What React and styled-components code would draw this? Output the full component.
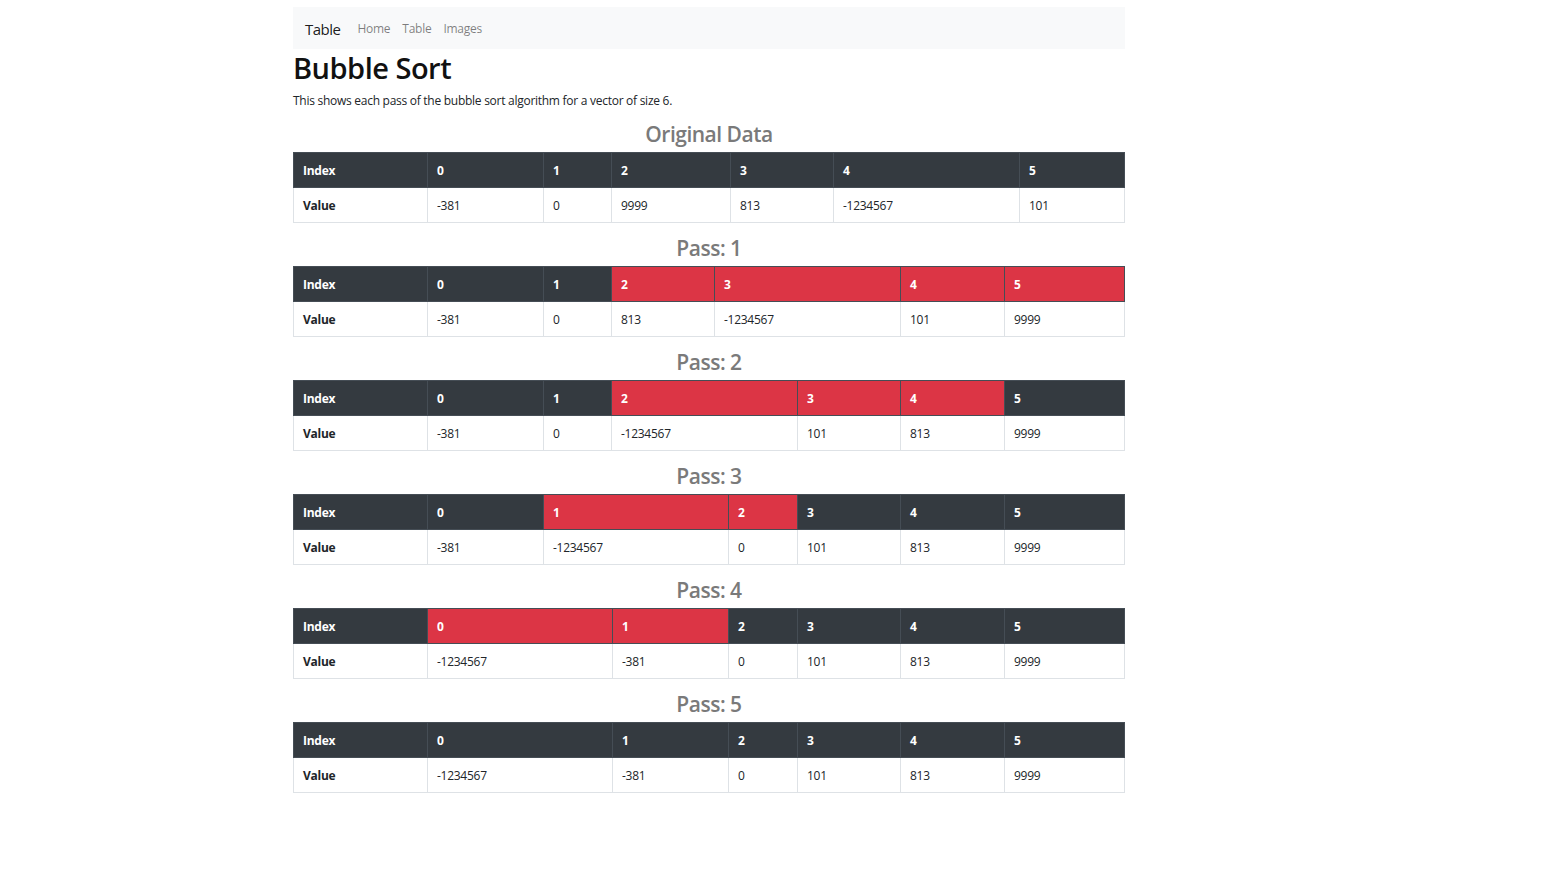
import React from "react";
import styled, { createGlobalStyle } from "styled-components";

const Global = createGlobalStyle`
  html, body { margin: 0; padding: 0; background: #fff; }
  body {
    font-family: "Open Sans", "Noto Sans", "Liberation Sans", sans-serif;
    font-size: 12px;
    line-height: 1.5;
    letter-spacing: -0.27px;
    color: #212529;
  }
`;

const Page = styled.div`
  width: 832px;
  margin: 7px 0 0 293px;
`;

const Navbar = styled.nav`
  display: flex;
  align-items: center;
  height: 40px;
  padding: 2px 12px 0 12px;
  background: #f8f9fa;
`;

const Brand = styled.span`
  font-size: 15px;
  color: rgba(0, 0, 0, 0.9);
  margin-right: 11px;
  letter-spacing: -0.5px;
`;

const NavLink = styled.a`
  font-size: 12px;
  color: rgba(0, 0, 0, 0.5);
  padding: 0 6px;
  text-decoration: none;
`;

const Title = styled.h1`
  font-size: 29px;
  font-weight: 600;
  line-height: 37px;
  letter-spacing: -0.5px;
  margin: 0 0 6px;
  color: #111;
`;

const Lead = styled.p`
  margin: 0 0 11px;
`;

const SectionTitle = styled.h3`
  font-size: 21px;
  font-weight: 600;
  line-height: 27px;
  letter-spacing: -0.5px;
  margin: 0 0 4px;
  text-align: center;
  color: #7a7a7a;
`;

const Table = styled.table`
  width: 831px;
  table-layout: fixed;
  border-collapse: collapse;
  margin-bottom: 12px;
`;

const Col = styled.col`
  width: ${(p) => p.$w}px;
`;

const Head = styled.th`
  background: ${(p) => (p.$hot ? "#dc3545" : "#343a40")};
  color: #fff;
  border: 1px solid #454d55;
  font-weight: 700;
  text-align: left;
  padding: 2px 9px 0;
  height: 32px;
`;

const RowHead = styled.th`
  border: 1px solid #dee2e6;
  font-weight: 700;
  text-align: left;
  padding: 2px 9px 0;
  height: 32px;
`;

const Cell = styled.td`
  border: 1px solid #dee2e6;
  padding: 2px 9px 0;
  height: 32px;
`;

const sections = [
  { title: "Original Data", widths: [134, 116, 68, 119, 103, 186, 105], values: [-381, 0, 9999, 813, -1234567, 101], hot: [] },
  { title: "Pass: 1", widths: [134, 116, 68, 103, 186, 104, 120], values: [-381, 0, 813, -1234567, 101, 9999], hot: [2, 3, 4, 5] },
  { title: "Pass: 2", widths: [134, 116, 68, 186, 103, 104, 120], values: [-381, 0, -1234567, 101, 813, 9999], hot: [2, 3, 4] },
  { title: "Pass: 3", widths: [134, 116, 185, 69, 103, 104, 120], values: [-381, -1234567, 0, 101, 813, 9999], hot: [1, 2] },
  { title: "Pass: 4", widths: [134, 185, 116, 69, 103, 104, 120], values: [-1234567, -381, 0, 101, 813, 9999], hot: [0, 1] },
  { title: "Pass: 5", widths: [134, 185, 116, 69, 103, 104, 120], values: [-1234567, -381, 0, 101, 813, 9999], hot: [] },
];

export default function App() {
  return (
    <>
      <Global />
      <Page>
        <Navbar>
          <Brand>Table</Brand>
          <NavLink href="#">Home</NavLink>
          <NavLink href="#">Table</NavLink>
          <NavLink href="#">Images</NavLink>
        </Navbar>
        <Title>Bubble Sort</Title>
        <Lead>This shows each pass of the bubble sort algorithm for a vector of size 6.</Lead>
        {sections.map((s) => (
          <section key={s.title}>
            <SectionTitle>{s.title}</SectionTitle>
            <Table>
              <colgroup>
                {s.widths.map((w, i) => (
                  <Col key={i} $w={w} />
                ))}
              </colgroup>
              <thead>
                <tr>
                  <Head>Index</Head>
                  {s.values.map((_, i) => (
                    <Head key={i} $hot={s.hot.includes(i)}>{i}</Head>
                  ))}
                </tr>
              </thead>
              <tbody>
                <tr>
                  <RowHead>Value</RowHead>
                  {s.values.map((v, i) => (
                    <Cell key={i}>{v}</Cell>
                  ))}
                </tr>
              </tbody>
            </Table>
          </section>
        ))}
      </Page>
    </>
  );
}
